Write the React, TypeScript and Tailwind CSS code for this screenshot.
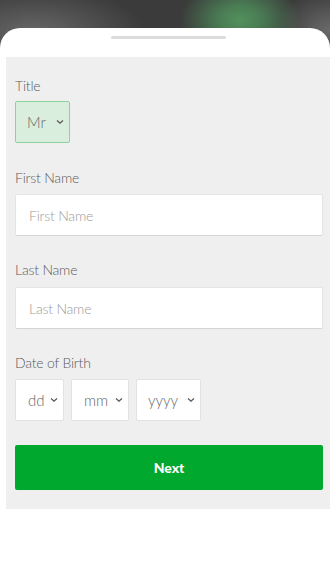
import React from "react";

function Chevron() {
  return (
    <svg
      className="pointer-events-none absolute right-[6px] top-1/2 -translate-y-1/2"
      width="8"
      height="5"
      viewBox="0 0 8 5"
      fill="none"
    >
      <path d="M1 1L4 3.8L7 1" stroke="#555" strokeWidth="1.2" />
    </svg>
  );
}

function Select({
  value,
  width,
  green,
  textPad,
}: {
  value: string;
  width: string;
  green?: boolean;
  textPad: string;
}) {
  return (
    <div className={`relative h-[42px] ${width}`}>
      <select
        defaultValue={value}
        className={`h-full w-full appearance-none rounded-[2px] border text-[15px] font-light text-[#666] outline-none ${textPad} ${
          green
            ? "border-[#8fd19c] bg-[#d9eedd]"
            : "border-[#e2e2e2] bg-white"
        }`}
        style={{ fontFamily: "Lato, 'Noto Sans', sans-serif" }}
      >
        <option>{value}</option>
      </select>
      <Chevron />
    </div>
  );
}

function Label({ children }: { children: React.ReactNode }) {
  return (
    <div className="h-[20px] text-[14px] leading-[20px] font-light text-[#5a5a5a] tracking-[-0.2px]">
      {children}
    </div>
  );
}

function TextInput({ placeholder }: { placeholder: string }) {
  return (
    <input
      placeholder={placeholder}
      className="h-[42px] w-full rounded-[2px] border border-[#e4e4e4] border-b-[#d4d4d4] bg-white pl-[13px] text-[14px] font-light text-[#555] placeholder:text-[#9a9a9a] outline-none tracking-[-0.2px]"
      style={{ fontFamily: "Lato, 'Noto Sans', sans-serif" }}
    />
  );
}

export default function App() {
  return (
    <div
      className="relative h-[582px] w-[330px] overflow-hidden bg-[#3b3b3b] bg-[radial-gradient(ellipse_60px_42px_at_240px_20px,#53905d_0%,#4a7c54_35%,rgba(59,59,59,0)_100%),radial-gradient(ellipse_110px_45px_at_35px_32px,#676767_0%,rgba(59,59,59,0)_100%),radial-gradient(ellipse_55px_40px_at_330px_30px,#6a6a6a_0%,rgba(59,59,59,0)_100%)]"
      style={{ fontFamily: "Lato, 'Noto Sans', sans-serif" }}
    >
      <div className="mt-[28px] flex h-[554px] flex-col rounded-t-[20px] bg-white">
        <div className="ml-[111px] mt-[8px] h-[3px] w-[115px] rounded-full bg-[#dcdcdc]" />
        <div className="ml-[6px] mt-[18px] flex flex-col bg-[#efefef] px-[9px] pb-[19px] pt-[19px] pr-[7px]">
          <Label>Title</Label>
          <div className="mt-[5px]">
            <Select value="Mr" width="w-[55px]" green textPad="pl-[11px]" />
          </div>

          <div className="mt-[25px]">
            <Label>First Name</Label>
          </div>
          <div className="mt-[6px]">
            <TextInput placeholder="First Name" />
          </div>

          <div className="mt-[24px]">
            <Label>Last Name</Label>
          </div>
          <div className="mt-[7px]">
            <TextInput placeholder="Last Name" />
          </div>

          <div className="mt-[24px]">
            <Label>Date of Birth</Label>
          </div>
          <div className="mt-[6px] flex gap-[7px]">
            <Select value="dd" width="w-[49px]" textPad="pl-[12px]" />
            <Select value="mm" width="w-[58px]" textPad="pl-[12px]" />
            <Select value="yyyy" width="w-[65px]" textPad="pl-[11px]" />
          </div>

          <button className="mt-[24px] h-[45px] w-full rounded-[2px] bg-[#00a82d] text-[14px] font-black text-white">
            Next
          </button>
        </div>
      </div>
    </div>
  );
}
